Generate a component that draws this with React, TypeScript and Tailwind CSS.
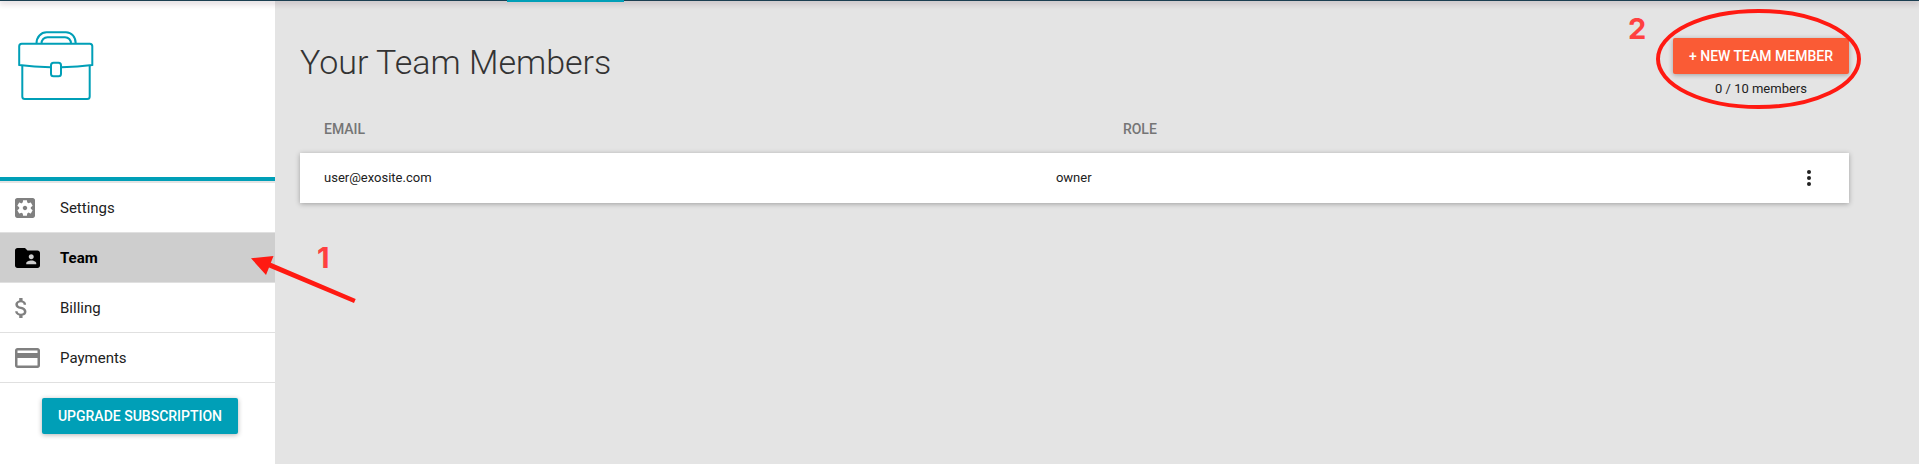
import type { ReactNode } from 'react';

const ICONS = {
  settings: {
    viewBox: '3 3 18 18',
    size: 'h-5 w-5',
    d: 'M12 10c-1.1 0-2 .9-2 2s.9 2 2 2 2-.9 2-2-.9-2-2-2zm7-7H5c-1.11 0-2 .9-2 2v14c0 1.1.89 2 2 2h14c1.11 0 2-.9 2-2V5c0-1.1-.89-2-2-2zm-1.75 9c0 .23-.02.46-.05.68l1.48 1.16c.13.11.17.3.08.45l-1.4 2.42c-.09.15-.27.21-.43.15l-1.74-.7c-.36.28-.76.51-1.18.69l-.26 1.85c-.03.17-.18.3-.35.3h-2.8c-.17 0-.32-.13-.35-.29l-.26-1.85c-.43-.18-.82-.41-1.18-.69l-1.74.7c-.16.06-.34 0-.43-.15l-1.4-2.42c-.09-.15-.05-.34.08-.45l1.48-1.16c-.03-.23-.05-.46-.05-.69 0-.23.02-.46.05-.68l-1.48-1.16c-.13-.11-.17-.3-.08-.45l1.4-2.42c.09-.15.27-.21.43-.15l1.74.7c.36-.28.76-.51 1.18-.69l.26-1.85c.03-.17.18-.3.35-.3h2.8c.17 0 .32.13.35.29l.26 1.85c.43.18.82.41 1.18.69l1.74-.7c.16-.06.34 0 .43.15l1.4 2.42c.09.15.05.34-.08.45l-1.48 1.16c.03.23.05.46.05.69z',
  },
  team: {
    viewBox: '2 4 20 16',
    size: 'h-5 w-[25px]',
    d: 'M20 6h-8l-2-2H4c-1.1 0-1.99.9-1.99 2L2 18c0 1.1.9 2 2 2h16c1.1 0 2-.9 2-2V8c0-1.1-.9-2-2-2zm-5 3c1.1 0 2 .9 2 2s-.9 2-2 2-2-.9-2-2 .9-2 2-2zm4 8h-8v-1c0-1.33 2.67-2 4-2s4 .67 4 2v1z',
  },
  billing: {
    viewBox: '6.2 3 10.8 18',
    size: 'h-5 w-3',
    d: 'M11.8 10.9c-2.27-.59-3-1.2-3-2.15 0-1.09 1.01-1.85 2.7-1.85 1.78 0 2.44.85 2.5 2.1h2.21c-.07-1.72-1.12-3.3-3.21-3.81V3h-3v2.16c-1.94.42-3.5 1.68-3.5 3.61 0 2.31 1.91 3.46 4.7 4.13 2.5.6 3 1.48 3 2.41 0 .69-.49 1.79-2.7 1.79-2.06 0-2.87-.92-2.98-2.1h-2.2c.12 2.19 1.76 3.42 3.68 3.83V21h3v-2.15c1.95-.37 3.5-1.5 3.5-3.55 0-2.84-2.43-3.81-4.7-4.4z',
  },
  payments: {
    viewBox: '2 4 20 16',
    size: 'h-5 w-[25px]',
    d: 'M20 4H4c-1.11 0-1.99.89-1.99 2L2 18c0 1.11.89 2 2 2h16c1.11 0 2-.89 2-2V6c0-1.11-.89-2-2-2zm0 14H4v-6h16v6zm0-10H4V6h16v2z',
  },
};

type IconName = keyof typeof ICONS;

function MenuIcon({ name }: { name: IconName }) {
  const icon = ICONS[name];
  return (
    <svg viewBox={icon.viewBox} className={icon.size} fill="currentColor" aria-hidden="true">
      <path d={icon.d} />
    </svg>
  );
}

function Briefcase() {
  return (
    <svg
      viewBox="18 31 76 70"
      className="h-[70px] w-[76px]"
      fill="none"
      stroke="#009fb7"
      strokeWidth="2"
      aria-hidden="true"
    >
      <path d="M36.5 43.5C36.5 37 41 32.3 46.5 32.3H66C71.5 32.3 75.7 37 75.7 43.5" />
      <path d="M41.5 43.5C41.5 40 44 37.2 47.5 37.2H65C68.5 37.2 71 40 71 43.5" />
      <path d="M50.5 67.2Q34 67 19.2 65V46.2Q19.2 43.7 21.7 43.7H89.8Q92.3 43.7 92.3 46.2V65Q78 67 61.5 67.2" />
      <path d="M22.3 65V96.5Q22.3 99 24.8 99H87.2Q89.7 99 89.7 96.5V65" />
      <rect x="51" y="62.7" width="10" height="13.6" rx="2.5" />
    </svg>
  );
}

function MenuItem({
  icon,
  label,
  active = false,
  children,
}: {
  icon: IconName;
  label: string;
  active?: boolean;
  children?: ReactNode;
}) {
  return (
    <li className="relative">
      <a
        href={`#${icon}`}
        aria-current={active ? 'page' : undefined}
        className={
          active
            ? 'flex h-[50px] items-center border-b border-[#e0e0e0] bg-[#cecece] pl-[15px] font-bold text-black'
            : 'flex h-[50px] items-center border-b border-[#e0e0e0] pl-[15px] text-[#212121]'
        }
      >
        <span className={active ? 'w-[45px] text-black' : 'w-[45px] text-[#808080]'}>
          <MenuIcon name={icon} />
        </span>
        <span className="pt-0.5">{label}</span>
      </a>
      {children}
    </li>
  );
}

function StepNumber({ value, place }: { value: number; place: string }) {
  return (
    <span
      className={`absolute font-['Inter',sans-serif] text-[29px] leading-[30px] font-bold text-[#ff4040] ${place}`}
    >
      {value}
    </span>
  );
}

export default function App() {
  return (
    <div className="flex min-h-screen flex-col bg-[#e4e4e4] font-['Roboto',sans-serif] text-[#212121]">
      <header className="relative z-10 h-px bg-[#1b3f51] shadow-[0_1px_6px_1px_rgba(60,20,40,0.3)]">
        <div className="ml-[507px] h-0.5 w-[117px] bg-[#009fb7]" />
      </header>
      <div className="flex grow">
        <aside className="relative z-[1] w-[275px] shrink-0 bg-white">
          <div className="h-[180px] border-b-4 border-[#009fb7] pt-[30px] pl-[18px]">
            <Briefcase />
          </div>
          <nav className="border-t-2 border-[#e4e4e4] text-[15px]">
            <ul>
              <MenuItem icon="settings" label="Settings" />
              <MenuItem icon="team" label="Team" active>
                <svg
                  viewBox="250 255 108 50"
                  className="absolute top-[22px] left-[250px] h-[50px] w-[108px]"
                  fill="#ff1a12"
                  aria-hidden="true"
                >
                  <path d="M251 258.3L273.5 256L270.8 262.8L355.7 299L354 303L269 267.5L266 275Z" />
                </svg>
                <StepNumber value={1} place="top-[10px] left-[317px]" />
              </MenuItem>
              <MenuItem icon="billing" label="Billing" />
              <MenuItem icon="payments" label="Payments" />
            </ul>
          </nav>
          <div className="mt-[15px] pr-[37px] pl-[42px]">
            <button className="h-9 w-full rounded-xs bg-[#009fb7] text-sm font-medium whitespace-nowrap text-white shadow-[0_1px_5px_rgba(0,0,0,0.3)]">
              UPGRADE SUBSCRIPTION
            </button>
          </div>
        </aside>
        <main className="grow pr-[70px] pl-[25px]">
          <div className="flex items-start justify-between pt-[37px]">
            <h1 className="pt-1 text-[34px] leading-[40px] font-light text-[#333333]">Your Team Members</h1>
            <div className="relative w-[176px] text-center">
              <button className="h-9 w-full rounded-xs bg-[#fa5b35] text-sm font-medium whitespace-nowrap text-white shadow-[0_1px_5px_rgba(0,0,0,0.3)]">
                + NEW TEAM MEMBER
              </button>
              <p className="mt-[5px] text-[13px] leading-5">0 / 10 members</p>
              <svg
                viewBox="0 0 206 100"
                className="pointer-events-none absolute -top-[29px] -left-[17px] h-[100px] w-[206px]"
                fill="none"
                aria-hidden="true"
              >
                <ellipse cx="102.5" cy="50" rx="100.5" ry="48" stroke="#ff1a12" strokeWidth="4" />
              </svg>
              <StepNumber value={2} place="-top-[24px] -left-[45px]" />
            </div>
          </div>
          <table className="mt-1.5 w-full table-fixed border-collapse text-left">
            <thead>
              <tr className="h-12 text-sm font-medium text-[#757575]">
                <th className="w-[48.8%] pl-6 font-medium">EMAIL</th>
                <th className="pl-[67px] font-medium">ROLE</th>
                <th className="w-[80px]" aria-label="Actions" />
              </tr>
            </thead>
            <tbody>
              <tr className="h-[50px] bg-white text-[13px] shadow-[0_1px_5px_rgba(0,0,0,0.3)]">
                <td className="pl-6">user@exosite.com</td>
                <td>owner</td>
                <td>
                  <button aria-label="More actions" className="ml-7 block">
                    <svg viewBox="0 0 24 24" className="h-6 w-6" fill="currentColor" aria-hidden="true">
                      <circle cx="12" cy="6" r="2" />
                      <circle cx="12" cy="12" r="2" />
                      <circle cx="12" cy="18" r="2" />
                    </svg>
                  </button>
                </td>
              </tr>
            </tbody>
          </table>
        </main>
      </div>
    </div>
  );
}
